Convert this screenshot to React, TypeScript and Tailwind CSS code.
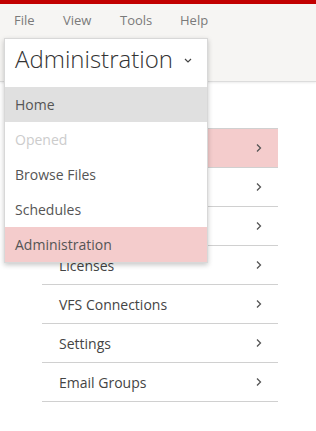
import React from "react";

const Chevron = () => (
  <svg width="6" height="10" viewBox="0 0 6 10" className="shrink-0">
    <path d="M1 1.5 L4.5 5 L1 8.5" fill="none" stroke="#555" strokeWidth="1.3" />
  </svg>
);

const rows = ["", "", "", "Licenses", "VFS Connections", "Settings", "Email Groups"];
const menu = [
  { t: "Home", cls: "bg-[#e0e0e0] text-[#555]" },
  { t: "Opened", cls: "text-[#cccccc]" },
  { t: "Browse Files", cls: "text-[#555]" },
  { t: "Schedules", cls: "text-[#555]" },
  { t: "Administration", cls: "bg-[#f4cccc] text-[#555]" },
];

export default function App() {
  return (
    <div
      className="relative w-[316px] h-[431px] overflow-hidden bg-white"
      style={{ fontFamily: '"Open Sans", "Noto Sans", sans-serif' }}
    >
      <div className="h-[4px] bg-[#c20000]" />
      <div className="h-[78px] bg-[#f6f5f3] border-b border-[#dcdcdc] shadow-[0_1px_2px_rgba(0,0,0,0.08)]">
        <div className="flex pt-[6px] pl-[14px] text-[13px] text-[#7a7a7a] leading-[20px]">
          <span className="w-[49px]">File</span>
          <span className="w-[57px]">View</span>
          <span className="w-[60px]">Tools</span>
          <span>Help</span>
        </div>
      </div>
      <div className="ml-[42px] mt-[46px] w-[236px] border-t border-[#d0d0d0]">
        {rows.map((r, i) => (
          <div
            key={i}
            className={`flex h-[39px] items-center justify-between border-b border-[#d0d0d0] pl-[17px] pr-[16px] text-[14px] text-[#444] ${
              i === 0 ? "bg-[#f4cccc]" : ""
            }`}
          >
            <span>{r}</span>
            <Chevron />
          </div>
        ))}
      </div>

      <div className="absolute left-[4px] top-[38px] w-[204px] bg-white border border-[#d8d8d8] shadow-[0_2px_5px_rgba(0,0,0,0.22)]">
        <div className="flex h-[48px] items-center pl-[10px] pb-[9px]">
          <span className="text-[24px] font-light text-[#333] leading-none">Administration</span>
          <svg width="8" height="5" viewBox="0 0 8 5" className="ml-[11px] mt-[3px]">
            <path d="M1 1 L4 4 L7 1" fill="none" stroke="#444" strokeWidth="1.2" />
          </svg>
        </div>
        {menu.map((m) => (
          <div key={m.t} className={`flex h-[35px] items-center pl-[10px] text-[14px] ${m.cls}`}>
            {m.t}
          </div>
        ))}
      </div>
    </div>
  );
}
